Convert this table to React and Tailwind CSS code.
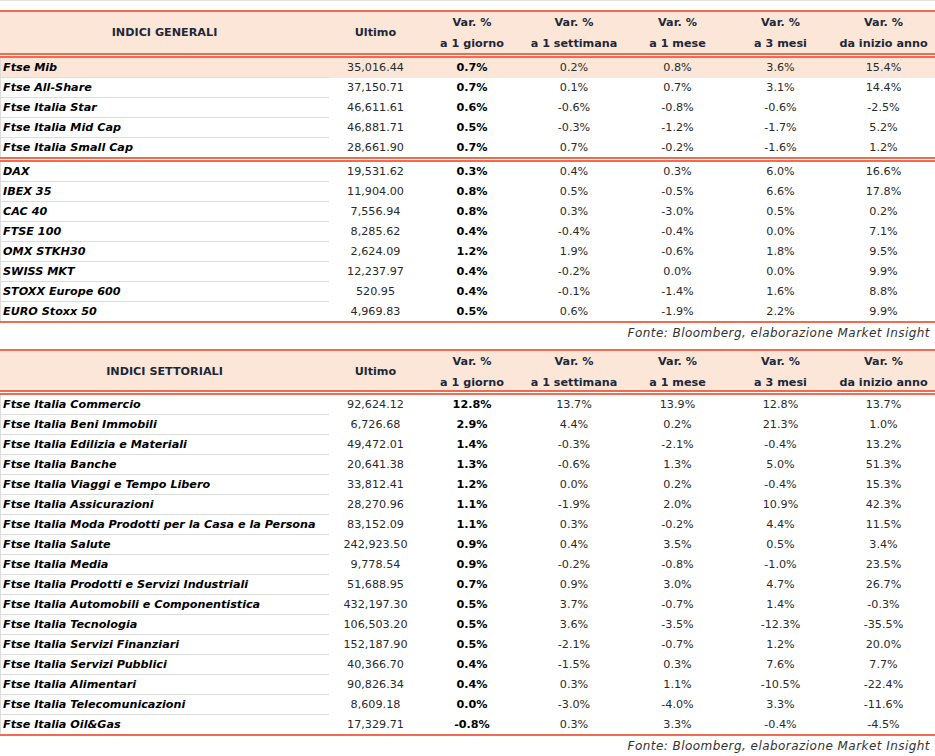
const GRID = "grid grid-cols-[329px_93px_100px_104px_103px_103px_103px]"

const generali = [
  [
    ["Ftse Mib", "35,016.44", "0.7%", "0.2%", "0.8%", "3.6%", "15.4%"],
    ["Ftse All-Share", "37,150.71", "0.7%", "0.1%", "0.7%", "3.1%", "14.4%"],
    ["Ftse Italia Star", "46,611.61", "0.6%", "-0.6%", "-0.8%", "-0.6%", "-2.5%"],
    ["Ftse Italia Mid Cap", "46,881.71", "0.5%", "-0.3%", "-1.2%", "-1.7%", "5.2%"],
    ["Ftse Italia Small Cap", "28,661.90", "0.7%", "0.7%", "-0.2%", "-1.6%", "1.2%"],
  ],
  [
    ["DAX", "19,531.62", "0.3%", "0.4%", "0.3%", "6.0%", "16.6%"],
    ["IBEX 35", "11,904.00", "0.8%", "0.5%", "-0.5%", "6.6%", "17.8%"],
    ["CAC 40", "7,556.94", "0.8%", "0.3%", "-3.0%", "0.5%", "0.2%"],
    ["FTSE 100", "8,285.62", "0.4%", "-0.4%", "-0.4%", "0.0%", "7.1%"],
    ["OMX STKH30", "2,624.09", "1.2%", "1.9%", "-0.6%", "1.8%", "9.5%"],
    ["SWISS MKT", "12,237.97", "0.4%", "-0.2%", "0.0%", "0.0%", "9.9%"],
    ["STOXX Europe 600", "520.95", "0.4%", "-0.1%", "-1.4%", "1.6%", "8.8%"],
    ["EURO Stoxx 50", "4,969.83", "0.5%", "0.6%", "-1.9%", "2.2%", "9.9%"],
  ],
]

const settoriali = [
  ["Ftse Italia Commercio", "92,624.12", "12.8%", "13.7%", "13.9%", "12.8%", "13.7%"],
  ["Ftse Italia Beni Immobili", "6,726.68", "2.9%", "4.4%", "0.2%", "21.3%", "1.0%"],
  ["Ftse Italia Edilizia e Materiali", "49,472.01", "1.4%", "-0.3%", "-2.1%", "-0.4%", "13.2%"],
  ["Ftse Italia Banche", "20,641.38", "1.3%", "-0.6%", "1.3%", "5.0%", "51.3%"],
  ["Ftse Italia Viaggi e Tempo Libero", "33,812.41", "1.2%", "0.0%", "0.2%", "-0.4%", "15.3%"],
  ["Ftse Italia Assicurazioni", "28,270.96", "1.1%", "-1.9%", "2.0%", "10.9%", "42.3%"],
  ["Ftse Italia Moda Prodotti per la Casa e la Persona", "83,152.09", "1.1%", "0.3%", "-0.2%", "4.4%", "11.5%"],
  ["Ftse Italia Salute", "242,923.50", "0.9%", "0.4%", "3.5%", "0.5%", "3.4%"],
  ["Ftse Italia Media", "9,778.54", "0.9%", "-0.2%", "-0.8%", "-1.0%", "23.5%"],
  ["Ftse Italia Prodotti e Servizi Industriali", "51,688.95", "0.7%", "0.9%", "3.0%", "4.7%", "26.7%"],
  ["Ftse Italia Automobili e Componentistica", "432,197.30", "0.5%", "3.7%", "-0.7%", "1.4%", "-0.3%"],
  ["Ftse Italia Tecnologia", "106,503.20", "0.5%", "3.6%", "-3.5%", "-12.3%", "-35.5%"],
  ["Ftse Italia Servizi Finanziari", "152,187.90", "0.5%", "-2.1%", "-0.7%", "1.2%", "20.0%"],
  ["Ftse Italia Servizi Pubblici", "40,366.70", "0.4%", "-1.5%", "0.3%", "7.6%", "7.7%"],
  ["Ftse Italia Alimentari", "90,826.34", "0.4%", "0.3%", "1.1%", "-10.5%", "-22.4%"],
  ["Ftse Italia Telecomunicazioni", "8,609.18", "0.0%", "-3.0%", "-4.0%", "3.3%", "-11.6%"],
  ["Ftse Italia Oil&Gas", "17,329.71", "-0.8%", "0.3%", "3.3%", "-0.4%", "-4.5%"],
]

const varHeads = ["a 1 giorno", "a 1 settimana", "a 1 mese", "a 3 mesi", "da inizio anno"]

const OrangeLine = () => <div className="h-[2px] bg-[#f26a50]" />

const DoubleLine = () => (
  <div>
    <div className="h-[2px] bg-[#f26a50]" />
    <div className="h-px bg-white" />
    <div className="h-[2px] bg-[#f26a50]" />
  </div>
)

const Header = ({ title, tall }) => (
  <div className={`${GRID} bg-[#fce6d8] font-bold text-[#1d2838] ${tall ? "h-[41px]" : "h-[39px]"}`}>
    <div className="flex items-center justify-center">{title}</div>
    <div className="flex items-center justify-center">Ultimo</div>
    {varHeads.map((h) => (
      <div key={h} className="flex flex-col items-center justify-center leading-[21px]">
        <span>Var. %</span>
        <span>{h}</span>
      </div>
    ))}
  </div>
)

const Row = ({ r, last, hl }) => (
  <div className={`${GRID} ${last ? "h-[19px]" : "h-[20px]"} ${hl ? "bg-[#fce6d8]" : ""}`}>
    <div
      className={`flex items-center pl-[2px] font-bold italic text-black border-l border-[#dcdcdc] ${
        last ? "" : "border-b"
      }`}
    >
      {r[0]}
    </div>
    <div className="flex items-center justify-center text-[#2a2a2a]">{r[1]}</div>
    <div className="flex items-center justify-center font-bold text-black">{r[2]}</div>
    {r.slice(3).map((v, i) => (
      <div key={i} className="flex items-center justify-center text-[#2a2a2a]">
        {v}
      </div>
    ))}
  </div>
)

const Fonte = ({ className }) => (
  <div className={`flex items-center justify-end pr-[5px] italic text-[12px] tracking-[0.45px] text-[#333] ${className}`}>
    Fonte: Bloomberg, elaborazione Market Insight
  </div>
)

export default function App() {
  return (
    <div className="w-[935px] h-[756px] overflow-hidden bg-white border-t border-[#e2e2e2] pt-[9px] font-['DejaVu_Sans',sans-serif] text-[11.2px] leading-none">
      <OrangeLine />
      <Header title="INDICI GENERALI" tall />
      <DoubleLine />
      {generali[0].map((r, i) => (
        <Row key={r[0]} r={r} hl={i === 0} last={i === generali[0].length - 1} />
      ))}
      <DoubleLine />
      {generali[1].map((r, i) => (
        <Row key={r[0]} r={r} last={i === generali[1].length - 1} />
      ))}
      <OrangeLine />
      <Fonte className="h-[19px] mb-[7px]" />

      <OrangeLine />
      <Header title="INDICI SETTORIALI" />
      <DoubleLine />
      {settoriali.map((r, i) => (
        <Row key={r[0]} r={r} last={i === settoriali.length - 1} />
      ))}
      <OrangeLine />
      <Fonte className="h-[19px]" />
    </div>
  )
}
